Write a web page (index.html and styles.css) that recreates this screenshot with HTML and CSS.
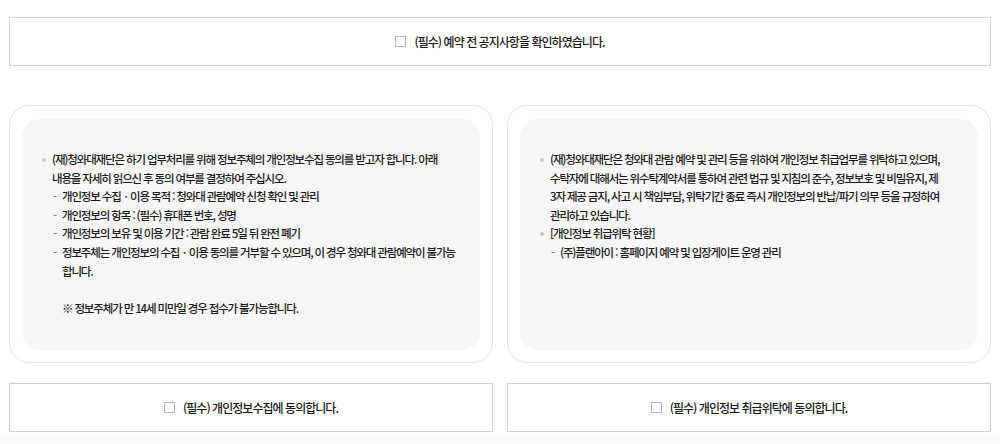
FILE: index.html
```html
<!DOCTYPE html>
<html lang="ko">
<head>
<meta charset="utf-8">
<title>개인정보 동의</title>
<link rel="stylesheet" href="styles.css">
</head>
<body>
<div class="page">
  <div class="agree-box agree-top">
    <label class="check"><span class="box"></span><span class="label-text">(필수) 예약 전 공지사항을 확인하였습니다.</span></label>
  </div>

  <div class="terms">
    <div class="card">
      <div class="card-inner">
        <ul class="dot-list">
          <li>(재)청와대재단은 하기 업무처리를 위해 정보주체의 개인정보수집 동의를 받고자 합니다. 아래<br>내용을 자세히 읽으신 후 동의 여부를 결정하여 주십시오.
            <ul class="dash-list">
              <li>개인정보 수집ㆍ이용 목적 : 청와대 관람예약 신청 확인 및 관리</li>
              <li>개인정보의 항목 : (필수) 휴대폰 번호, 성명</li>
              <li>개인정보의 보유 및 이용 기간 : 관람 완료 5일 뒤 완전 폐기</li>
              <li>정보주체는 개인정보의 수집ㆍ이용 동의를 거부할 수 있으며, 이 경우 청와대 관람예약이 불가능<br>합니다.</li>
            </ul>
            <p class="note">※ 정보주체가 만 14세 미만일 경우 접수가 불가능합니다.</p>
          </li>
        </ul>
      </div>
    </div>

    <div class="card">
      <div class="card-inner">
        <ul class="dot-list">
          <li>(재)청와대재단은 청와대 관람 예약 및 관리 등을 위하여 개인정보 취급업무를 위탁하고 있으며,<br>수탁자에 대해서는 위수탁계약서를 통하여 관련 법규 및 지침의 준수, 정보보호 및 비밀유지, 제<br>3자 제공 금지, 사고 시 책임부담, 위탁기간 종료 즉시 개인정보의 반납/파기 의무 등을 규정하여<br>관리하고 있습니다.</li>
          <li>[개인정보 취급위탁 현황]
            <ul class="dash-list">
              <li>(주)플랜아이 : 홈페이지 예약 및 입장게이트 운영 관리</li>
            </ul>
          </li>
        </ul>
      </div>
    </div>

    <div class="agree-box">
      <label class="check"><span class="box"></span><span class="label-text">(필수) 개인정보수집에 동의합니다.</span></label>
    </div>

    <div class="agree-box">
      <label class="check"><span class="box"></span><span class="label-text">(필수) 개인정보 취급위탁에 동의합니다.</span></label>
    </div>
  </div>

  <div class="next-section"></div>
</div>
</body>
</html>
```

FILE: styles.css
```css
* { box-sizing: border-box; }

html, body {
  margin: 0;
  padding: 0;
  background: #fff;
}

body {
  font-family: "Noto Sans CJK KR", "Noto Sans", sans-serif;
  font-weight: 500;
  color: #1a1a1a;
}

.page {
  padding: 17px 9px 0 9px;
}

.agree-box {
  height: 49px;
  border: 1px solid #cfcfcf;
  background: #fff;
  display: flex;
  align-items: center;
  justify-content: center;
}

.check {
  display: flex;
  align-items: center;
  gap: 8px;
  font-size: 12px;
  letter-spacing: -0.08em;
  color: #1a1a1a;
}

.box {
  width: 11px;
  height: 11px;
  border: 1px solid #b5b5b5;
  background: #fff;
  flex: none;
}

.terms {
  margin-top: 39px;
  display: grid;
  grid-template-columns: 1fr 1fr;
  column-gap: 14px;
  row-gap: 20px;
}

.card {
  border: 1px solid #e6e6e6;
  border-radius: 20px;
  padding: 13px 12px 12px 12px;
  display: flex;
}

.card-inner {
  flex: 1;
  background: #f7f7f7;
  border-radius: 18px;
  padding: 31px 14px 33px 20px;
  font-size: 11.5px;
  line-height: 18.6px;
  letter-spacing: -0.1em;
}

.dot-list {
  list-style: none;
  margin: 0;
  padding: 0;
}

.dot-list > li {
  position: relative;
  padding-left: 10px;
}

.dot-list > li::before {
  content: "";
  position: absolute;
  left: 0;
  top: 8px;
  width: 4px;
  height: 4px;
  border-radius: 50%;
  background: #c8c8c8;
}

.dash-list {
  list-style: none;
  margin: 0;
  padding: 0;
}

.dash-list > li {
  position: relative;
  padding-left: 10px;
}

.dash-list > li::before {
  content: "-";
  position: absolute;
  left: 1px;
  top: 0;
  color: #777;
}

.note {
  margin: 18.6px 0 0 0;
  padding-left: 10px;
}

.next-section {
  margin: 3px -9px 0 -9px;
  height: 20px;
  background: #f9f9f9;
}
```
